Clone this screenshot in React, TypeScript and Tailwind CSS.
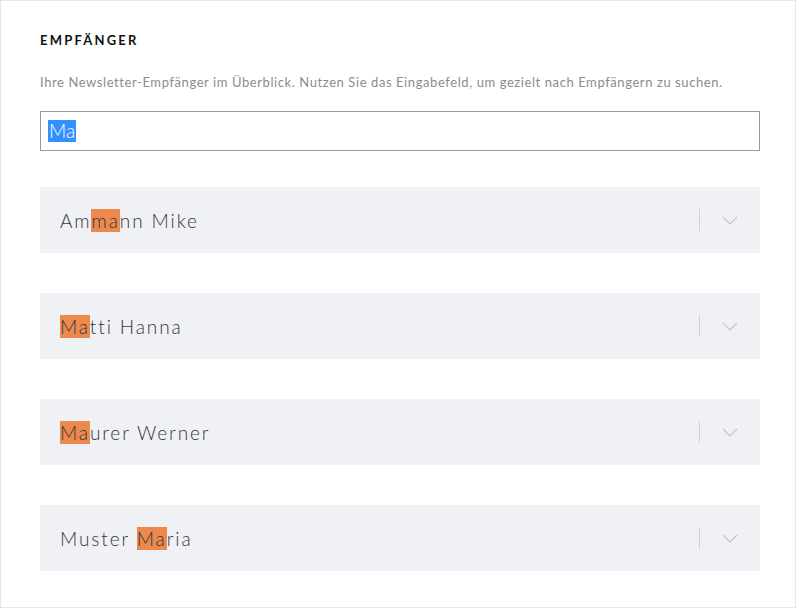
import React from "react";

const names: { before: string; hit: string; after: string }[] = [
  { before: "Am", hit: "ma", after: "nn Mike" },
  { before: "", hit: "Ma", after: "tti Hanna" },
  { before: "", hit: "Ma", after: "urer Werner" },
  { before: "Muster ", hit: "Ma", after: "ria" },
];

function Chevron() {
  return (
    <svg width="16" height="9" viewBox="0 0 16 9" fill="none">
      <path d="M1 1l7 7 7-7" stroke="#c4c6cc" strokeWidth="1.2" />
    </svg>
  );
}

export default function App() {
  return (
    <div
      className="w-[796px] h-[608px] border border-[#e6e6e6] bg-white"
      style={{ fontFamily: "Lato, 'Noto Sans', sans-serif" }}
    >
      <div className="pl-[39px] pr-[35px] pt-[31px]">
        <h1 className="text-[13px] font-bold tracking-[0.17em] text-[#111] leading-[16px]">
          EMPFÄNGER
        </h1>
        <p className="mt-[26px] text-[13px] text-[#8c8c8c] leading-[16px] tracking-[0.045em]">
          Ihre Newsletter-Empfänger im Überblick. Nutzen Sie das Eingabefeld, um gezielt nach Empfängern zu suchen.
        </p>
        <div className="mt-[21px] h-[40px] border border-[#999] flex items-center px-[7px]">
          <span className="bg-[#3390ff] text-white text-[19px] font-light leading-[22px] px-[1px]">Ma</span>
        </div>
        <div className="mt-[36px] flex flex-col gap-[40px]">
          {names.map((n, i) => (
            <div key={i} className="h-[66px] bg-[#f0f1f5] flex items-center pl-[20px] pr-[22px]">
              <span className="flex-1 text-[19px] font-light text-[#34343c] tracking-[0.1em] leading-[21px]">
                {n.before}
                <span className="bg-[#ec8a4e]">{n.hit}</span>
                {n.after}
              </span>
              <div className="w-px h-[22px] bg-[#cfd0d5]" />
              <div className="ml-[22px]">
                <Chevron />
              </div>
            </div>
          ))}
        </div>
      </div>
    </div>
  );
}
